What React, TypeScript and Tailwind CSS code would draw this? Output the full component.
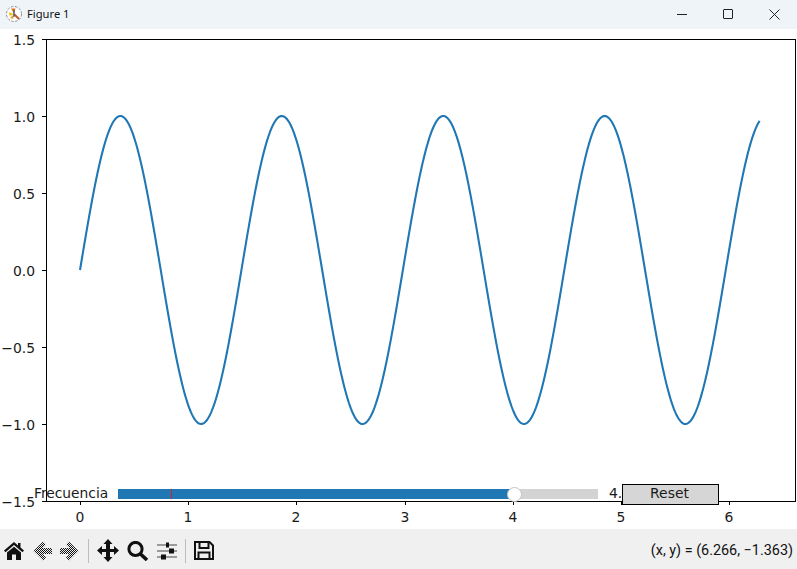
const W = 797;
const X0 = 80, XS = 108.17;
const Y0 = 270, YS = 154;
const xTicks = [0, 1, 2, 3, 4, 5, 6];
const yTicks = [
  { v: 1.5, l: "1.5" },
  { v: 1, l: "1.0" },
  { v: 0.5, l: "0.5" },
  { v: 0, l: "0.0" },
  { v: -0.5, l: "\u22120.5" },
  { v: -1, l: "\u22121.0" },
  { v: -1.5, l: "\u22121.5" },
];

function sinePath() {
  const pts: string[] = [];
  for (let i = 0; i <= 680; i++) {
    const t = (i / 680) * 6.283;
    const x = X0 + t * XS;
    const y = Y0 - Math.sin(4.21 * t) * YS;
    pts.push(`${x.toFixed(2)},${y.toFixed(2)}`);
  }
  return "M" + pts.join("L");
}

function Plot() {
  return (
    <svg width={W} height={500} viewBox="0 29 797 500" className="block" style={{ fontFamily: '"DejaVu Sans", sans-serif' }}>
      <rect x="46.5" y="39.5" width="749" height="462" fill="white" stroke="black" strokeWidth="1" />
      {xTicks.map((t) => {
        const x = Math.round(X0 + t * XS) + 0.5;
        return (
          <g key={t}>
            <line x1={x} x2={x} y1={501} y2={505} stroke="black" />
            <text x={x - 0.5} y={522} textAnchor="middle" fontSize="13.9" fill="#1a1a1a">
              {t}
            </text>
          </g>
        );
      })}
      {yTicks.map((t) => {
        const y = Math.round(Y0 - t.v * YS) + 0.5;
        return (
          <g key={t.l}>
            <line x1={42} x2={46} y1={y} y2={y} stroke="black" />
            <text x={35} y={y + 5} textAnchor="end" fontSize="13.9" fill="#1a1a1a">
              {t.l}
            </text>
          </g>
        );
      })}
      <path d={sinePath()} fill="none" stroke="#1f77b4" strokeWidth="2.08" />
    </svg>
  );
}

function HomeIcon() {
  return (
    <svg width="20" height="18" viewBox="0 0 20 18" className="block">
      <path d="M10 0 L0 8.5 L1.5 10.2 L10 3 L18.5 10.2 L20 8.5 L16.5 5.5 V1 H14 V3.4Z" fill="#111" />
      <path d="M3 10.5 L10 4.7 L17 10.5 V18 H12 V12.5 H8 V18 H3Z" fill="#111" />
    </svg>
  );
}

function ArrowIcon({ id, flip }: { id: string; flip?: boolean }) {
  return (
    <svg width="19" height="20" viewBox="0 0 19 20" className={flip ? "block -scale-x-100" : "block"}>
      <defs>
        <pattern id={id} width="2" height="2" patternUnits="userSpaceOnUse">
          <rect width="1" height="1" fill="#111" />
          <rect x="1" y="1" width="1" height="1" fill="#111" />
        </pattern>
      </defs>
      <path d="M10 0.5 L0.5 10 L10 19.5 L13 16.5 L9.5 13 H19 V7 H9.5 L13 3.5Z" fill={`url(#${id})`} />
    </svg>
  );
}

function MoveIcon() {
  return (
    <svg width="22" height="23" viewBox="0 0 22 23" className="block">
      <path d="M11 0 L15.5 5 H13 V10 H17 V7 L22 11.5 L17 16 V13 H13 V18 H15.5 L11 23 L6.5 18 H9 V13 H5 V16 L0 11.5 L5 7 V10 H9 V5 H6.5Z" fill="#111" />
    </svg>
  );
}

function ZoomIcon() {
  return (
    <svg width="22" height="20" viewBox="0 0 22 20" fill="none" stroke="#111" className="block">
      <circle cx="8.5" cy="8" r="6.6" strokeWidth="3" />
      <path d="M13.5 13 L20 19" strokeWidth="3.6" />
    </svg>
  );
}

function SlidersIcon() {
  return (
    <svg width="20" height="18" viewBox="0 0 20 18" className="block">
      <path d="M0 3H20M0 9H20M0 15H20" stroke="#444" strokeWidth="1.2" />
      <rect x="9" y="0.5" width="3" height="5" fill="#111" />
      <rect x="12" y="6.5" width="5" height="5" fill="#111" />
      <rect x="4" y="12.5" width="5" height="5" fill="#111" />
    </svg>
  );
}

function SaveIcon() {
  return (
    <svg width="20" height="19" viewBox="0 0 20 19" fill="none" stroke="#111" strokeWidth="2" className="block">
      <path d="M1 1 H15.5 L19 4.5 V18 H1Z" />
      <path d="M5.5 1 V7 H14.5 V1" />
      <path d="M4.5 18 V11.5 H15.5 V18" />
    </svg>
  );
}

function FigureLogo() {
  return (
    <svg width="18" height="18" viewBox="0 0 18 18" className="ml-[5px] block">
      <circle cx="9" cy="9" r="7.5" fill="white" stroke="#8a8a8a" strokeWidth="1" strokeDasharray="2.5 1.5" />
      <path d="M9 9 L4 7 L4.5 11Z" fill="#f2c21a" />
      <path d="M9 9 L6 3.5 L10.5 3.5Z" fill="#e8701a" />
      <path d="M9 9 L5 13 L8 14Z" fill="#f2a01a" />
      <path d="M9 9 L14 14" stroke="#c9521a" strokeWidth="1.8" />
      <path d="M9 5 L9 12" stroke="#2a5a8a" strokeWidth="1.2" />
    </svg>
  );
}

export default function App() {
  return (
    <div className="flex h-[569px] w-[797px] flex-col overflow-hidden bg-white font-['Liberation_Sans',sans-serif]">
      <div className="flex h-[29px] items-center bg-[#eff4f9] pb-px">
        <FigureLogo />
        <span className="ml-[4px] font-['Noto_Sans',sans-serif] text-[11.2px] text-[#111]">Figure 1</span>
        <div className="ml-auto flex h-full items-center">
          <div className="flex h-full w-[46px] items-center justify-center">
            <div className="h-px w-[10px] bg-[#222]" />
          </div>
          <div className="flex h-full w-[46px] items-center justify-center">
            <div className="h-[10px] w-[10px] rounded-[1px] border border-[#222]" />
          </div>
          <div className="flex h-full w-[46px] items-center justify-center">
            <svg width="11" height="11" viewBox="0 0 11 11" stroke="#222" fill="none">
              <path d="M0.5 0.5 L10.5 10.5 M10.5 0.5 L0.5 10.5" />
            </svg>
          </div>
        </div>
      </div>

      <div className="relative h-[500px] font-['DejaVu_Sans',sans-serif]">
        <Plot />
        <span className="absolute left-[34px] top-[456px] text-[13.8px] leading-4 text-[#1a1a1a]">Frecuencia</span>
        <div className="absolute left-[118px] top-[460px] flex h-[10px] w-[480px] bg-[#d3d3d3]">
          <div className="relative h-full w-[396px] bg-[#1f77b4]">
            <div className="absolute left-[53px] top-0 h-full w-px bg-[#d81e2c]" />
          </div>
        </div>
        <div className="absolute left-[507px] top-[458px] h-[15px] w-[15px] rounded-full border border-[#c4c4c4] bg-white" />
        <span className="absolute left-[609px] top-[456px] text-[13.9px] leading-4 text-[#1a1a1a]">4.</span>
        <div className="absolute left-[622px] top-[455px] flex h-[21px] w-[97px] items-center justify-center border border-black bg-[#d6d6d6] pb-[2px] pr-[2px] text-[13.9px] text-[#1a1a1a]">
          Reset
        </div>
      </div>

      <div className="flex h-[40px] items-center bg-[#f0f0f0] pl-[4px] pt-[3px]">
        <HomeIcon />
        <div className="ml-[9px]"><ArrowIcon id="ck-back" /></div>
        <div className="ml-[8px]"><ArrowIcon id="ck-forward" flip /></div>
        <div className="ml-[9px] h-[24px] w-px bg-[#bdbdbd]" />
        <div className="ml-[8px]"><MoveIcon /></div>
        <div className="ml-[8px]"><ZoomIcon /></div>
        <div className="ml-[8px]"><SlidersIcon /></div>
        <div className="ml-[8px] h-[24px] w-px bg-[#bdbdbd]" />
        <div className="ml-[8px]"><SaveIcon /></div>
        <span className="ml-auto mr-[4px] font-['Roboto',sans-serif] text-[14.4px] text-[#111]">(x, y) = (6.266, −1.363)</span>
      </div>
    </div>
  );
}
